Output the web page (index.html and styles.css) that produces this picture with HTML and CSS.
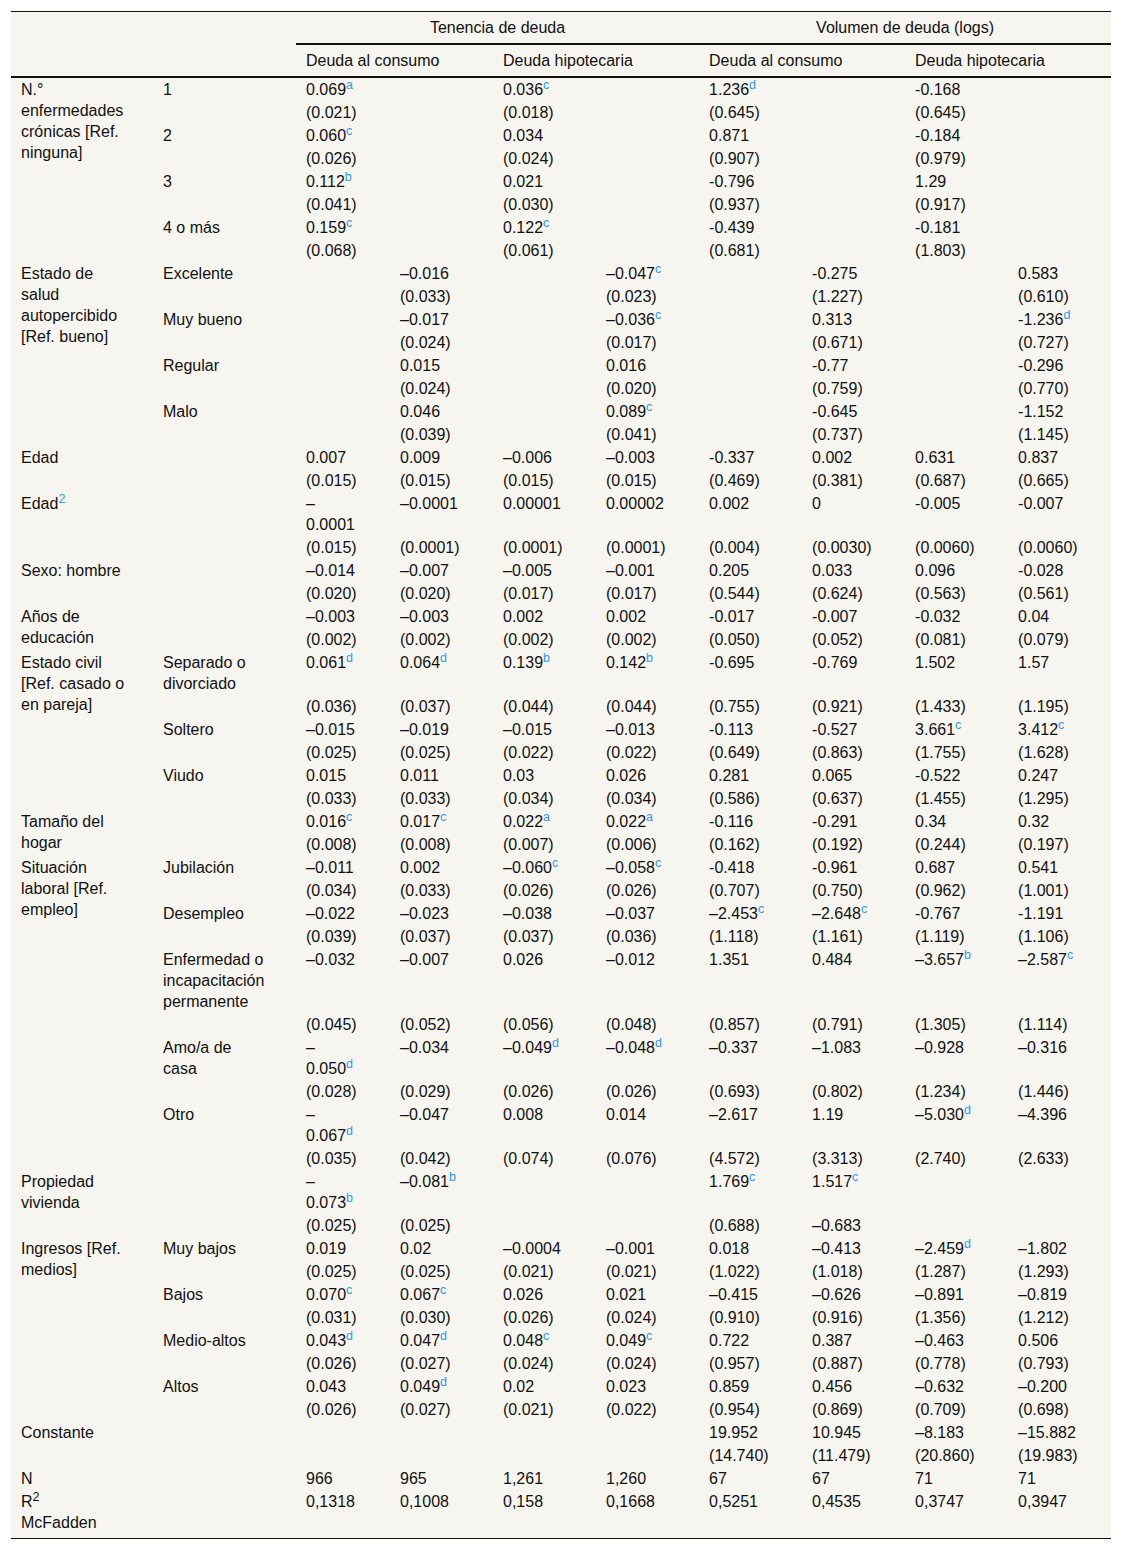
FILE: index.html
```html
<!DOCTYPE html>
<html lang="es">
<head>
    <meta charset="UTF-8">
    <meta name="viewport" content="width=device-width, initial-scale=1.0">
    <title>Tenencia y volumen de deuda</title>
    <link rel="stylesheet" href="styles.css">
</head>
<body>
    <div class="wrap">
    <table class="tbl">
        <colgroup>
            <col class="w1"><col class="w2"><col class="w3">
            <col class="w4"><col class="w4"><col class="w4"><col class="w4"><col class="w4"><col class="w4"><col class="w4">
        </colgroup>
        <thead>
            <tr>
                <th rowspan="2" class="blank"></th>
                <th rowspan="2" class="blank"></th>
                <th colspan="4" class="grp">Tenencia de deuda</th>
                <th colspan="4" class="grp">Volumen de deuda (logs)</th>
            </tr>
            <tr>
                <th colspan="2" class="sub">Deuda al consumo</th>
                <th colspan="2" class="sub">Deuda hipotecaria</th>
                <th colspan="2" class="sub">Deuda al consumo</th>
                <th colspan="2" class="sub">Deuda hipotecaria</th>
            </tr>
        </thead>
        <tbody>
            <!-- enfermedades -->
            <tr>
                <td class="var" rowspan="8">N.° enfermedades crónicas [Ref. ninguna]</td>
                <td class="cat">1</td>
                <td class="m1">0.069<sup class="fn">a</sup></td><td></td><td>0.036<sup class="fn">c</sup></td><td></td>
                <td>1.236<sup class="fn">d</sup></td><td></td><td>-0.168</td><td></td>
            </tr>
            <tr>
                <td class="cat"></td>
                <td class="m1">(0.021)</td><td></td><td>(0.018)</td><td></td><td>(0.645)</td><td></td><td>(0.645)</td><td></td>
            </tr>
            <tr>
                <td class="cat">2</td>
                <td class="m1">0.060<sup class="fn">c</sup></td><td></td><td>0.034</td><td></td><td>0.871</td><td></td><td>-0.184</td><td></td>
            </tr>
            <tr>
                <td class="cat"></td>
                <td class="m1">(0.026)</td><td></td><td>(0.024)</td><td></td><td>(0.907)</td><td></td><td>(0.979)</td><td></td>
            </tr>
            <tr>
                <td class="cat">3</td>
                <td class="m1">0.112<sup class="fn">b</sup></td><td></td><td>0.021</td><td></td><td>-0.796</td><td></td><td>1.29</td><td></td>
            </tr>
            <tr>
                <td class="cat"></td>
                <td class="m1">(0.041)</td><td></td><td>(0.030)</td><td></td><td>(0.937)</td><td></td><td>(0.917)</td><td></td>
            </tr>
            <tr>
                <td class="cat">4 o más</td>
                <td class="m1">0.159<sup class="fn">c</sup></td><td></td><td>0.122<sup class="fn">c</sup></td><td></td><td>-0.439</td><td></td><td>-0.181</td><td></td>
            </tr>
            <tr>
                <td class="cat"></td>
                <td class="m1">(0.068)</td><td></td><td>(0.061)</td><td></td><td>(0.681)</td><td></td><td>(1.803)</td><td></td>
            </tr>

            <!-- salud -->
            <tr>
                <td class="var" rowspan="8">Estado de salud autopercibido [Ref. bueno]</td>
                <td class="cat">Excelente</td>
                <td class="m1"></td><td>–0.016</td><td></td><td>–0.047<sup class="fn">c</sup></td><td></td><td>-0.275</td><td></td><td>0.583</td>
            </tr>
            <tr>
                <td class="cat"></td>
                <td class="m1"></td><td>(0.033)</td><td></td><td>(0.023)</td><td></td><td>(1.227)</td><td></td><td>(0.610)</td>
            </tr>
            <tr>
                <td class="cat">Muy bueno</td>
                <td class="m1"></td><td>–0.017</td><td></td><td>–0.036<sup class="fn">c</sup></td><td></td><td>0.313</td><td></td><td>-1.236<sup class="fn">d</sup></td>
            </tr>
            <tr>
                <td class="cat"></td>
                <td class="m1"></td><td>(0.024)</td><td></td><td>(0.017)</td><td></td><td>(0.671)</td><td></td><td>(0.727)</td>
            </tr>
            <tr>
                <td class="cat">Regular</td>
                <td class="m1"></td><td>0.015</td><td></td><td>0.016</td><td></td><td>-0.77</td><td></td><td>-0.296</td>
            </tr>
            <tr>
                <td class="cat"></td>
                <td class="m1"></td><td>(0.024)</td><td></td><td>(0.020)</td><td></td><td>(0.759)</td><td></td><td>(0.770)</td>
            </tr>
            <tr>
                <td class="cat">Malo</td>
                <td class="m1"></td><td>0.046</td><td></td><td>0.089<sup class="fn">c</sup></td><td></td><td>-0.645</td><td></td><td>-1.152</td>
            </tr>
            <tr>
                <td class="cat"></td>
                <td class="m1"></td><td>(0.039)</td><td></td><td>(0.041)</td><td></td><td>(0.737)</td><td></td><td>(1.145)</td>
            </tr>

            <!-- edad -->
            <tr>
                <td class="var" rowspan="2">Edad</td>
                <td class="cat" rowspan="2"></td>
                <td class="m1">0.007</td><td>0.009</td><td>–0.006</td><td>–0.003</td><td>-0.337</td><td>0.002</td><td>0.631</td><td>0.837</td>
            </tr>
            <tr>
                <td class="m1">(0.015)</td><td>(0.015)</td><td>(0.015)</td><td>(0.015)</td><td>(0.469)</td><td>(0.381)</td><td>(0.687)</td><td>(0.665)</td>
            </tr>
            <tr>
                <td class="var" rowspan="2">Edad<sup class="fn">2</sup></td>
                <td class="cat" rowspan="2"></td>
                <td class="m1">–0.0001</td><td>–0.0001</td><td>0.00001</td><td>0.00002</td><td>0.002</td><td>0</td><td>-0.005</td><td>-0.007</td>
            </tr>
            <tr>
                <td class="m1">(0.015)</td><td>(0.0001)</td><td>(0.0001)</td><td>(0.0001)</td><td>(0.004)</td><td>(0.0030)</td><td>(0.0060)</td><td>(0.0060)</td>
            </tr>
            <tr>
                <td class="var" rowspan="2">Sexo: hombre</td>
                <td class="cat" rowspan="2"></td>
                <td class="m1">–0.014</td><td>–0.007</td><td>–0.005</td><td>–0.001</td><td>0.205</td><td>0.033</td><td>0.096</td><td>-0.028</td>
            </tr>
            <tr>
                <td class="m1">(0.020)</td><td>(0.020)</td><td>(0.017)</td><td>(0.017)</td><td>(0.544)</td><td>(0.624)</td><td>(0.563)</td><td>(0.561)</td>
            </tr>
            <tr>
                <td class="var" rowspan="2">Años de educación</td>
                <td class="cat" rowspan="2"></td>
                <td class="m1">–0.003</td><td>–0.003</td><td>0.002</td><td>0.002</td><td>-0.017</td><td>-0.007</td><td>-0.032</td><td>0.04</td>
            </tr>
            <tr>
                <td class="m1">(0.002)</td><td>(0.002)</td><td>(0.002)</td><td>(0.002)</td><td>(0.050)</td><td>(0.052)</td><td>(0.081)</td><td>(0.079)</td>
            </tr>

            <!-- estado civil -->
            <tr>
                <td class="var" rowspan="6">Estado civil [Ref. casado o en pareja]</td>
                <td class="cat">Separado o divorciado</td>
                <td class="m1">0.061<sup class="fn">d</sup></td><td>0.064<sup class="fn">d</sup></td><td>0.139<sup class="fn">b</sup></td><td>0.142<sup class="fn">b</sup></td>
                <td>-0.695</td><td>-0.769</td><td>1.502</td><td>1.57</td>
            </tr>
            <tr>
                <td class="cat"></td>
                <td class="m1">(0.036)</td><td>(0.037)</td><td>(0.044)</td><td>(0.044)</td><td>(0.755)</td><td>(0.921)</td><td>(1.433)</td><td>(1.195)</td>
            </tr>
            <tr>
                <td class="cat">Soltero</td>
                <td class="m1">–0.015</td><td>–0.019</td><td>–0.015</td><td>–0.013</td><td>-0.113</td><td>-0.527</td><td>3.661<sup class="fn">c</sup></td><td>3.412<sup class="fn">c</sup></td>
            </tr>
            <tr>
                <td class="cat"></td>
                <td class="m1">(0.025)</td><td>(0.025)</td><td>(0.022)</td><td>(0.022)</td><td>(0.649)</td><td>(0.863)</td><td>(1.755)</td><td>(1.628)</td>
            </tr>
            <tr>
                <td class="cat">Viudo</td>
                <td class="m1">0.015</td><td>0.011</td><td>0.03</td><td>0.026</td><td>0.281</td><td>0.065</td><td>-0.522</td><td>0.247</td>
            </tr>
            <tr>
                <td class="cat"></td>
                <td class="m1">(0.033)</td><td>(0.033)</td><td>(0.034)</td><td>(0.034)</td><td>(0.586)</td><td>(0.637)</td><td>(1.455)</td><td>(1.295)</td>
            </tr>

            <tr>
                <td class="var" rowspan="2">Tamaño del hogar</td>
                <td class="cat" rowspan="2"></td>
                <td class="m1">0.016<sup class="fn">c</sup></td><td>0.017<sup class="fn">c</sup></td><td>0.022<sup class="fn">a</sup></td><td>0.022<sup class="fn">a</sup></td>
                <td>-0.116</td><td>-0.291</td><td>0.34</td><td>0.32</td>
            </tr>
            <tr>
                <td class="m1">(0.008)</td><td>(0.008)</td><td>(0.007)</td><td>(0.006)</td><td>(0.162)</td><td>(0.192)</td><td>(0.244)</td><td>(0.197)</td>
            </tr>

            <!-- situacion laboral -->
            <tr>
                <td class="var" rowspan="10">Situación laboral [Ref. empleo]</td>
                <td class="cat">Jubilación</td>
                <td class="m1">–0.011</td><td>0.002</td><td>–0.060<sup class="fn">c</sup></td><td>–0.058<sup class="fn">c</sup></td>
                <td>-0.418</td><td>-0.961</td><td>0.687</td><td>0.541</td>
            </tr>
            <tr>
                <td class="cat"></td>
                <td class="m1">(0.034)</td><td>(0.033)</td><td>(0.026)</td><td>(0.026)</td><td>(0.707)</td><td>(0.750)</td><td>(0.962)</td><td>(1.001)</td>
            </tr>
            <tr>
                <td class="cat">Desempleo</td>
                <td class="m1">–0.022</td><td>–0.023</td><td>–0.038</td><td>–0.037</td>
                <td>–2.453<sup class="fn">c</sup></td><td>–2.648<sup class="fn">c</sup></td><td>-0.767</td><td>-1.191</td>
            </tr>
            <tr>
                <td class="cat"></td>
                <td class="m1">(0.039)</td><td>(0.037)</td><td>(0.037)</td><td>(0.036)</td><td>(1.118)</td><td>(1.161)</td><td>(1.119)</td><td>(1.106)</td>
            </tr>
            <tr>
                <td class="cat">Enfermedad o incapacitación permanente</td>
                <td class="m1">–0.032</td><td>–0.007</td><td>0.026</td><td>–0.012</td>
                <td>1.351</td><td>0.484</td><td>–3.657<sup class="fn">b</sup></td><td>–2.587<sup class="fn">c</sup></td>
            </tr>
            <tr>
                <td class="cat"></td>
                <td class="m1">(0.045)</td><td>(0.052)</td><td>(0.056)</td><td>(0.048)</td><td>(0.857)</td><td>(0.791)</td><td>(1.305)</td><td>(1.114)</td>
            </tr>
            <tr>
                <td class="cat">Amo/a de casa</td>
                <td class="m1">–0.050<sup class="fn">d</sup></td><td>–0.034</td><td>–0.049<sup class="fn">d</sup></td><td>–0.048<sup class="fn">d</sup></td>
                <td>–0.337</td><td>–1.083</td><td>–0.928</td><td>–0.316</td>
            </tr>
            <tr>
                <td class="cat"></td>
                <td class="m1">(0.028)</td><td>(0.029)</td><td>(0.026)</td><td>(0.026)</td><td>(0.693)</td><td>(0.802)</td><td>(1.234)</td><td>(1.446)</td>
            </tr>
            <tr>
                <td class="cat">Otro</td>
                <td class="m1">–0.067<sup class="fn">d</sup></td><td>–0.047</td><td>0.008</td><td>0.014</td>
                <td>–2.617</td><td>1.19</td><td>–5.030<sup class="fn">d</sup></td><td>–4.396</td>
            </tr>
            <tr>
                <td class="cat"></td>
                <td class="m1">(0.035)</td><td>(0.042)</td><td>(0.074)</td><td>(0.076)</td><td>(4.572)</td><td>(3.313)</td><td>(2.740)</td><td>(2.633)</td>
            </tr>

            <tr>
                <td class="var" rowspan="2">Propiedad vivienda</td>
                <td class="cat" rowspan="2"></td>
                <td class="m1">–0.073<sup class="fn">b</sup></td><td>–0.081<sup class="fn">b</sup></td><td></td><td></td>
                <td>1.769<sup class="fn">c</sup></td><td>1.517<sup class="fn">c</sup></td><td></td><td></td>
            </tr>
            <tr>
                <td class="m1">(0.025)</td><td>(0.025)</td><td></td><td></td><td>(0.688)</td><td>–0.683</td><td></td><td></td>
            </tr>

            <!-- ingresos -->
            <tr>
                <td class="var" rowspan="8">Ingresos [Ref. medios]</td>
                <td class="cat">Muy bajos</td>
                <td class="m1">0.019</td><td>0.02</td><td>–0.0004</td><td>–0.001</td>
                <td>0.018</td><td>–0.413</td><td>–2.459<sup class="fn">d</sup></td><td>–1.802</td>
            </tr>
            <tr>
                <td class="cat"></td>
                <td class="m1">(0.025)</td><td>(0.025)</td><td>(0.021)</td><td>(0.021)</td><td>(1.022)</td><td>(1.018)</td><td>(1.287)</td><td>(1.293)</td>
            </tr>
            <tr>
                <td class="cat">Bajos</td>
                <td class="m1">0.070<sup class="fn">c</sup></td><td>0.067<sup class="fn">c</sup></td><td>0.026</td><td>0.021</td>
                <td>–0.415</td><td>–0.626</td><td>–0.891</td><td>–0.819</td>
            </tr>
            <tr>
                <td class="cat"></td>
                <td class="m1">(0.031)</td><td>(0.030)</td><td>(0.026)</td><td>(0.024)</td><td>(0.910)</td><td>(0.916)</td><td>(1.356)</td><td>(1.212)</td>
            </tr>
            <tr>
                <td class="cat">Medio-altos</td>
                <td class="m1">0.043<sup class="fn">d</sup></td><td>0.047<sup class="fn">d</sup></td><td>0.048<sup class="fn">c</sup></td><td>0.049<sup class="fn">c</sup></td>
                <td>0.722</td><td>0.387</td><td>–0.463</td><td>0.506</td>
            </tr>
            <tr>
                <td class="cat"></td>
                <td class="m1">(0.026)</td><td>(0.027)</td><td>(0.024)</td><td>(0.024)</td><td>(0.957)</td><td>(0.887)</td><td>(0.778)</td><td>(0.793)</td>
            </tr>
            <tr>
                <td class="cat">Altos</td>
                <td class="m1">0.043</td><td>0.049<sup class="fn">d</sup></td><td>0.02</td><td>0.023</td>
                <td>0.859</td><td>0.456</td><td>–0.632</td><td>–0.200</td>
            </tr>
            <tr>
                <td class="cat"></td>
                <td class="m1">(0.026)</td><td>(0.027)</td><td>(0.021)</td><td>(0.022)</td><td>(0.954)</td><td>(0.869)</td><td>(0.709)</td><td>(0.698)</td>
            </tr>

            <tr>
                <td class="var" rowspan="2">Constante</td>
                <td class="cat" rowspan="2"></td>
                <td class="m1"></td><td></td><td></td><td></td>
                <td>19.952</td><td>10.945</td><td>–8.183</td><td>–15.882</td>
            </tr>
            <tr>
                <td class="m1"></td><td></td><td></td><td></td><td>(14.740)</td><td>(11.479)</td><td>(20.860)</td><td>(19.983)</td>
            </tr>
            <tr>
                <td class="var">N</td>
                <td class="cat"></td>
                <td class="m1">966</td><td>965</td><td>1,261</td><td>1,260</td><td>67</td><td>67</td><td>71</td><td>71</td>
            </tr>
            <tr class="last">
                <td class="var">R<sup>2</sup><br>McFadden</td>
                <td class="cat"></td>
                <td class="m1">0,1318</td><td>0,1008</td><td>0,158</td><td>0,1668</td><td>0,5251</td><td>0,4535</td><td>0,3747</td><td>0,3947</td>
            </tr>
        </tbody>
    </table>
    </div>
</body>
</html>
```

FILE: styles.css
```css
*{
    padding: 0px;
    margin: 0px;
    box-sizing: border-box;
}
body{
    background-color: #fff;
    font-family: "Liberation Sans", Arial, Helvetica, sans-serif;
    font-size: 16px;
    line-height: 21px;
    color: #111;
}
.wrap{
    padding: 11px;
}
.tbl{
    width: 1100px;
    table-layout: fixed;
    border-collapse: collapse;
    background-color: #f7f5f0;
    border-top: 1px solid #111;
    border-bottom: 1px solid #111;
}
.w1{ width: 142px; }
.w2{ width: 143px; }
.w3{ width: 94px; }
.w4{ width: 103px; }

.tbl th{
    font-weight: normal;
    padding: 5px 10px;
    text-align: left;
}
.tbl th.grp{
    text-align: center;
    border-bottom: 2px solid #111;
}
.tbl th.blank,.tbl th.sub{
    border-bottom: 2px solid #111;
}
.tbl td{
    padding: 1px 10px;
    vertical-align: top;
}
.tbl td.var{
    padding-right: 21px;
}
.tbl td.cat{
    padding-right: 29px;
}
.tbl td.m1{
    padding-right: 32px;
}
.tbl tr.last td{
    padding-bottom: 5px;
}
sup{
    font-size: 12.5px;
    line-height: 0;
    vertical-align: 6px;
}
sup.fn{
    color: #2b9be6;
}
```
